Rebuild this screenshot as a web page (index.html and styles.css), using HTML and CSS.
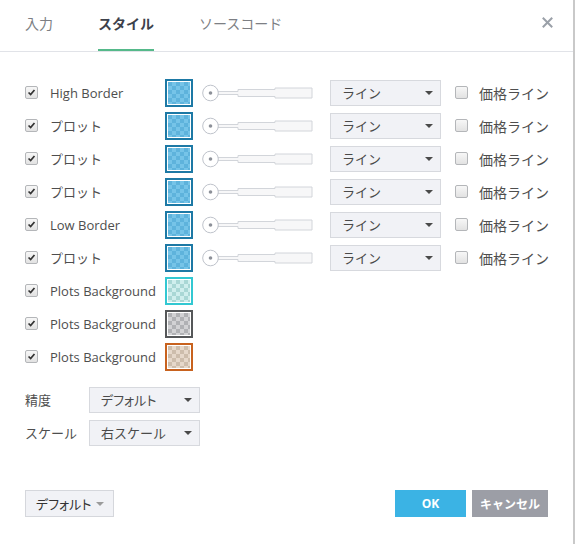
FILE: index.html
```html
<!DOCTYPE html>
<html lang="ja">
<head>
<meta charset="utf-8">
<link rel="stylesheet" href="styles.css">
</head>
<body>
<div class="dialog">
  <div class="header">
    <div class="tabs">
      <div class="tab">入力</div>
      <div class="tab active">スタイル</div>
      <div class="tab">ソースコード</div>
    </div>
    <svg class="close" width="11" height="11" viewBox="0 0 11 11"><path d="M1.5 1.5 L9.5 9.5 M9.5 1.5 L1.5 9.5" stroke="#9aa0a8" stroke-width="2" stroke-linecap="square"/></svg>
  </div>

  <div class="content">
    <div class="rows">
      <div class="row">
        <span class="cb checked"><svg viewBox="0 0 13 13"><path d="M3 6.5 L5.5 9 L10 3.5" fill="none" stroke="#333" stroke-width="2"/></svg></span>
        <span class="label">High Border</span>
        <span class="swatch blue"></span>
        <svg class="slider" width="112" height="18" viewBox="0 0 112 18"><path d="M16 7.5 H36 V5.5 H73 V4 H110 V14 H73 V12.5 H36 V10.5 H16" fill="#f7f7f8" stroke="#d2d5da"/><circle cx="8.5" cy="9" r="7.8" fill="#fff" stroke="#bfc3cb"/><circle cx="8.5" cy="9" r="1.8" fill="#8d9199"/></svg>
        <div class="select wide"><span>ライン</span><i class="arrow"></i></div>
        <span class="cb"></span>
        <span class="label2">価格ライン</span>
      </div>
      <div class="row">
        <span class="cb checked"><svg viewBox="0 0 13 13"><path d="M3 6.5 L5.5 9 L10 3.5" fill="none" stroke="#333" stroke-width="2"/></svg></span>
        <span class="label">プロット</span>
        <span class="swatch blue"></span>
        <svg class="slider" width="112" height="18" viewBox="0 0 112 18"><path d="M16 7.5 H36 V5.5 H73 V4 H110 V14 H73 V12.5 H36 V10.5 H16" fill="#f7f7f8" stroke="#d2d5da"/><circle cx="8.5" cy="9" r="7.8" fill="#fff" stroke="#bfc3cb"/><circle cx="8.5" cy="9" r="1.8" fill="#8d9199"/></svg>
        <div class="select wide"><span>ライン</span><i class="arrow"></i></div>
        <span class="cb"></span>
        <span class="label2">価格ライン</span>
      </div>
      <div class="row">
        <span class="cb checked"><svg viewBox="0 0 13 13"><path d="M3 6.5 L5.5 9 L10 3.5" fill="none" stroke="#333" stroke-width="2"/></svg></span>
        <span class="label">プロット</span>
        <span class="swatch blue"></span>
        <svg class="slider" width="112" height="18" viewBox="0 0 112 18"><path d="M16 7.5 H36 V5.5 H73 V4 H110 V14 H73 V12.5 H36 V10.5 H16" fill="#f7f7f8" stroke="#d2d5da"/><circle cx="8.5" cy="9" r="7.8" fill="#fff" stroke="#bfc3cb"/><circle cx="8.5" cy="9" r="1.8" fill="#8d9199"/></svg>
        <div class="select wide"><span>ライン</span><i class="arrow"></i></div>
        <span class="cb"></span>
        <span class="label2">価格ライン</span>
      </div>
      <div class="row">
        <span class="cb checked"><svg viewBox="0 0 13 13"><path d="M3 6.5 L5.5 9 L10 3.5" fill="none" stroke="#333" stroke-width="2"/></svg></span>
        <span class="label">プロット</span>
        <span class="swatch blue"></span>
        <svg class="slider" width="112" height="18" viewBox="0 0 112 18"><path d="M16 7.5 H36 V5.5 H73 V4 H110 V14 H73 V12.5 H36 V10.5 H16" fill="#f7f7f8" stroke="#d2d5da"/><circle cx="8.5" cy="9" r="7.8" fill="#fff" stroke="#bfc3cb"/><circle cx="8.5" cy="9" r="1.8" fill="#8d9199"/></svg>
        <div class="select wide"><span>ライン</span><i class="arrow"></i></div>
        <span class="cb"></span>
        <span class="label2">価格ライン</span>
      </div>
      <div class="row">
        <span class="cb checked"><svg viewBox="0 0 13 13"><path d="M3 6.5 L5.5 9 L10 3.5" fill="none" stroke="#333" stroke-width="2"/></svg></span>
        <span class="label">Low Border</span>
        <span class="swatch blue"></span>
        <svg class="slider" width="112" height="18" viewBox="0 0 112 18"><path d="M16 7.5 H36 V5.5 H73 V4 H110 V14 H73 V12.5 H36 V10.5 H16" fill="#f7f7f8" stroke="#d2d5da"/><circle cx="8.5" cy="9" r="7.8" fill="#fff" stroke="#bfc3cb"/><circle cx="8.5" cy="9" r="1.8" fill="#8d9199"/></svg>
        <div class="select wide"><span>ライン</span><i class="arrow"></i></div>
        <span class="cb"></span>
        <span class="label2">価格ライン</span>
      </div>
      <div class="row">
        <span class="cb checked"><svg viewBox="0 0 13 13"><path d="M3 6.5 L5.5 9 L10 3.5" fill="none" stroke="#333" stroke-width="2"/></svg></span>
        <span class="label">プロット</span>
        <span class="swatch blue"></span>
        <svg class="slider" width="112" height="18" viewBox="0 0 112 18"><path d="M16 7.5 H36 V5.5 H73 V4 H110 V14 H73 V12.5 H36 V10.5 H16" fill="#f7f7f8" stroke="#d2d5da"/><circle cx="8.5" cy="9" r="7.8" fill="#fff" stroke="#bfc3cb"/><circle cx="8.5" cy="9" r="1.8" fill="#8d9199"/></svg>
        <div class="select wide"><span>ライン</span><i class="arrow"></i></div>
        <span class="cb"></span>
        <span class="label2">価格ライン</span>
      </div>
      <div class="row">
        <span class="cb checked"><svg viewBox="0 0 13 13"><path d="M3 6.5 L5.5 9 L10 3.5" fill="none" stroke="#333" stroke-width="2"/></svg></span>
        <span class="label">Plots Background</span>
        <span class="swatch cyan"></span>
      </div>
      <div class="row">
        <span class="cb checked"><svg viewBox="0 0 13 13"><path d="M3 6.5 L5.5 9 L10 3.5" fill="none" stroke="#333" stroke-width="2"/></svg></span>
        <span class="label">Plots Background</span>
        <span class="swatch gray"></span>
      </div>
      <div class="row">
        <span class="cb checked"><svg viewBox="0 0 13 13"><path d="M3 6.5 L5.5 9 L10 3.5" fill="none" stroke="#333" stroke-width="2"/></svg></span>
        <span class="label">Plots Background</span>
        <span class="swatch orange"></span>
      </div>
    </div>

    <div class="props">
      <div class="prop">
        <span class="plabel">精度</span>
        <div class="select"><span class="palt">デフォルト</span><i class="arrow"></i></div>
      </div>
      <div class="prop">
        <span class="plabel">スケール</span>
        <div class="select"><span>右スケール</span><i class="arrow"></i></div>
      </div>
    </div>
  </div>

  <div class="footer">
    <div class="btn-default"><span class="palt">デフォルト</span><i class="arrow light"></i></div>
    <div class="actions">
      <div class="btn ok">OK</div>
      <div class="btn cancel">キャンセル</div>
    </div>
  </div>
</div>
</body>
</html>
```

FILE: styles.css
```css
* { box-sizing: border-box; }
html, body { margin: 0; padding: 0; background: #fff; }
body {
  font-family: "Open Sans", "Noto Sans CJK JP", sans-serif;
  font-size: 13px;
  color: #4e4e4e;
}
.dialog {
  width: 575px;
  height: 544px;
  border-right: 2px solid #c9c9c9;
  display: flex;
  flex-direction: column;
  background: #fff;
}
.header {
  height: 52px;
  border-bottom: 1px solid #e1e3e8;
  display: flex;
  justify-content: space-between;
  align-items: flex-start;
  padding-left: 25px;
  padding-right: 20px;
}
.tabs { display: flex; gap: 45px; }
.tab {
  height: 51px;
  padding-top: 14px;
  line-height: 20px;
  font-size: 14px;
  color: #7d7f84;
  border-bottom: 2px solid transparent;
}
.tab.active {
  color: #3d414b;
  font-weight: bold;
  border-bottom-color: #55b98a;
}
.close { margin-top: 17px; }

.content { padding: 24px 0 0 25px; }
.row {
  height: 33px;
  display: flex;
  align-items: center;
}
.cb {
  width: 13px;
  height: 13px;
  border: 1px solid #b4b6b9;
  border-radius: 2px;
  background: linear-gradient(#f7f7f7, #e2e2e2);
  flex: none;
  display: block;
}
.cb svg { display: block; width: 11px; height: 11px; }
.label { margin-left: 12px; width: 115px; white-space: nowrap; }
.swatch {
  width: 28px;
  height: 28px;
  border: 2px solid #1e7aa6;
  padding: 1px;
  background-clip: content-box;
  flex: none;
}
.swatch.blue {
  border-color: #1d79a5;
  background: repeating-conic-gradient(#76c4e8 0 25%, #5eb3dc 0 50%) 0 0 / 8px 8px content-box;
}
.swatch.cyan {
  border-color: #32c8d2;
  background: repeating-conic-gradient(#cfeeed 0 25%, #a9d7d5 0 50%) 0 0 / 8px 8px content-box;
}
.swatch.gray {
  border-color: #555759;
  background: repeating-conic-gradient(#d2d2d4 0 25%, #b0b1b4 0 50%) 0 0 / 8px 8px content-box;
}
.swatch.orange {
  border-color: #c8621e;
  background: repeating-conic-gradient(#e6d8ca 0 25%, #cdbdac 0 50%) 0 0 / 8px 8px content-box;
}
.slider { margin-left: 9px; flex: none; display: block; }
.select {
  width: 111px;
  height: 26px;
  background: #f1f2f6;
  border: 1px solid #d7d9de;
  display: flex;
  align-items: center;
  justify-content: space-between;
  padding: 0 7px 0 11px;
  color: #4a4a4a;
  font-size: 13px;
  flex: none;
}
.select.wide { margin-left: 16px; }
.arrow {
  width: 0;
  height: 0;
  border-left: 4px solid transparent;
  border-right: 4px solid transparent;
  border-top: 4px solid #4a4a4a;
  display: block;
}
.arrow.light { border-top-color: #9b9b9b; }
.row .cb:not(.checked) { margin-left: 14px; }
.label2 { margin-left: 11px; white-space: nowrap; font-size: 14px; }
.palt { font-feature-settings: "palt"; }

.props { margin-top: 10px; }
.prop { height: 33px; display: flex; align-items: center; }
.plabel { width: 64px; font-size: 13px; }

.footer {
  margin-top: auto;
  height: 54px;
  padding: 0 25px;
  display: flex;
  justify-content: space-between;
  align-items: flex-start;
}
.btn-default {
  width: 89px;
  height: 27px;
  background: #f1f2f6;
  border: 1px solid #d5d7dc;
  display: flex;
  align-items: center;
  justify-content: space-between;
  padding: 0 9px 0 10px;
  font-size: 13px;
  color: #333;
}
.actions { display: flex; gap: 6px; }
.btn {
  height: 27px;
  display: flex;
  align-items: center;
  justify-content: center;
  color: #fff;
  font-weight: bold;
  font-size: 12px;
}
.btn.ok { width: 71px; background: #3bb3e4; }
.btn.cancel { width: 76px; background: #9c9ea6; }
```
